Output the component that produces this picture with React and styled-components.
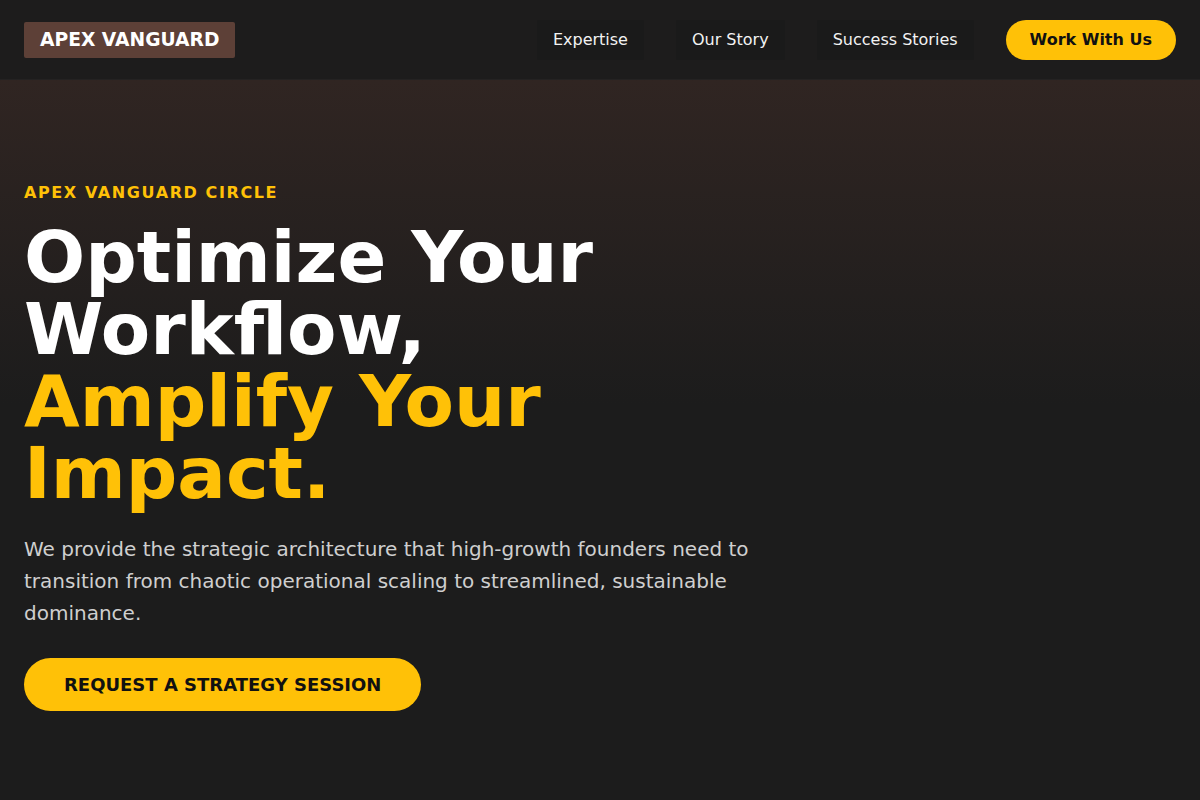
import React from "react";
import styled, { createGlobalStyle } from "styled-components";

const Global = createGlobalStyle`
  * { box-sizing: border-box; }
  html, body { margin: 0; padding: 0; background: #1c1c1c; }
  body { font-family: "DejaVu Sans", "Liberation Sans", sans-serif; color: #fff; }
`;

const Page = styled.div`
  min-height: 800px;
  background: #1c1c1c;
`;

const Header = styled.header`
  height: 80px;
  padding: 0 24px;
  display: flex;
  align-items: center;
  justify-content: space-between;
  background: #1d1c1c;
  border-bottom: 1px solid #242222;
`;

const Logo = styled.div`
  background: #5d4037;
  color: #fff;
  font-weight: 700;
  font-size: 18.7px;
  height: 36px;
  padding: 0 16px;
  display: flex;
  align-items: center;
  border-radius: 2px;
`;

const Nav = styled.nav`
  display: flex;
  align-items: center;
  gap: 32px;
`;

const NavLink = styled.a`
  height: 40px;
  padding: 0 16px;
  display: flex;
  align-items: center;
  background: #1a1a1a;
  color: #f2f2f2;
  font-size: 16px;
  text-decoration: none;
  border-radius: 2px;
`;

const CtaSmall = styled.a`
  height: 40px;
  padding: 0 24px;
  display: flex;
  align-items: center;
  background: #ffc107;
  color: #111;
  font-weight: 700;
  font-size: 16px;
  border-radius: 999px;
  text-decoration: none;
`;

const Hero = styled.section`
  padding: 103px 24px 80px;
  min-height: 720px;
  background: linear-gradient(180deg, #302522 0%, #1c1c1c 45%);
`;

const Eyebrow = styled.div`
  color: #ffc107;
  font-weight: 700;
  font-size: 16px;
  letter-spacing: 1.6px;
  margin-bottom: 19px;
`;

const Title = styled.h1`
  margin: 0 0 24px;
  max-width: 640px;
  font-size: 72px;
  line-height: 1;
  font-weight: 700;
  color: #fff;
`;

const Accent = styled.span`
  color: #ffc107;
`;

const Lead = styled.p`
  margin: 0 0 29px;
  max-width: 750px;
  font-size: 20px;
  line-height: 32px;
  color: #cfcfcf;
`;

const CtaLarge = styled.a`
  display: inline-flex;
  align-items: center;
  height: 53px;
  padding: 0 40px;
  background: #ffc107;
  color: #111;
  font-weight: 700;
  font-size: 18px;
  border-radius: 999px;
  text-decoration: none;
`;

export default function App() {
  return (
    <Page>
      <Global />
      <Header>
        <Logo>APEX VANGUARD</Logo>
        <Nav>
          <NavLink href="#">Expertise</NavLink>
          <NavLink href="#">Our Story</NavLink>
          <NavLink href="#">Success Stories</NavLink>
          <CtaSmall href="#">Work With Us</CtaSmall>
        </Nav>
      </Header>
      <Hero>
        <Eyebrow>APEX VANGUARD CIRCLE</Eyebrow>
        <Title>
          Optimize Your Workflow, <Accent>Amplify Your Impact.</Accent>
        </Title>
        <Lead>
          We provide the strategic architecture that high-growth founders need
          to transition from chaotic operational scaling to streamlined,
          sustainable dominance.
        </Lead>
        <CtaLarge href="#">REQUEST A STRATEGY SESSION</CtaLarge>
      </Hero>
    </Page>
  );
}
